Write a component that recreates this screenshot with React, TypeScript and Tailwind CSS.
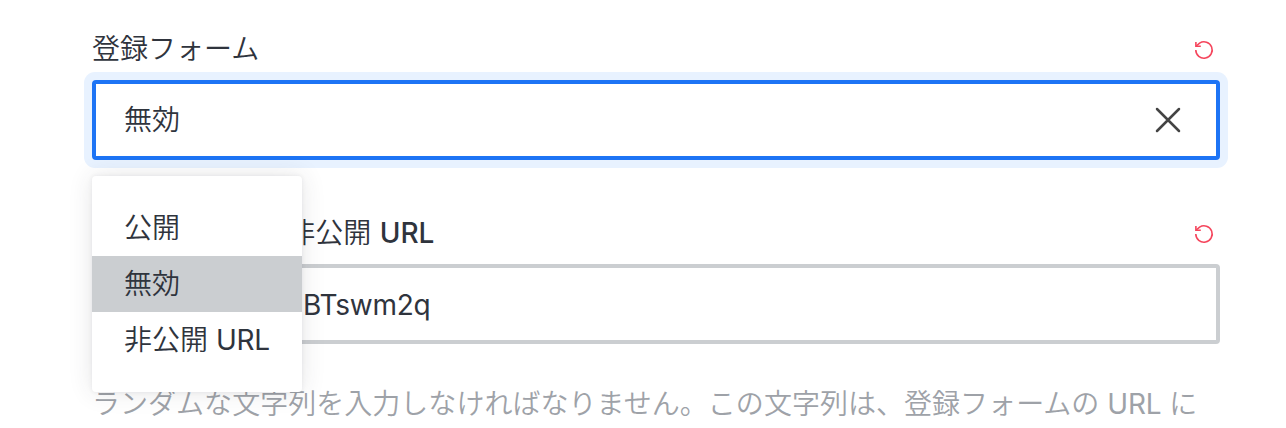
import type { ReactNode } from "react";

function ResetIcon() {
  return (
    <svg className="h-5 w-5" viewBox="0 0 20 20" fill="none" stroke="#f5455c" strokeWidth="1.6">
      <path d="M1.8 10A8.2 8.2 0 1 0 5.6 3.1L2.2 6" />
      <path d="M1.9 2V6.2H6.8" />
    </svg>
  );
}

function CloseIcon() {
  return (
    <svg className="h-7 w-7" viewBox="0 0 28 28" fill="none" stroke="#444" strokeWidth="2.5" strokeLinecap="round">
      <path d="M3 3L25 25M25 3L3 25" />
    </svg>
  );
}

function Label({ children }: { children: ReactNode }) {
  return (
    <div className="flex h-14 items-center justify-between pr-1.5">
      <span className="pt-0.5 [word-spacing:0.7px]">{children}</span>
      <button type="button" className="mt-1">
        <ResetIcon />
      </button>
    </div>
  );
}

function Latin({ children }: { children: ReactNode }) {
  return <span className="font-normal tracking-[-0.25px]">{children}</span>;
}

export default function App() {
  return (
    <main className="h-[428px] overflow-hidden bg-white pt-5 pl-[92px] font-['Inter','Noto_Sans_CJK_JP',sans-serif] text-[28px] leading-[56px] font-[350] whitespace-nowrap text-[#2f343d]">
      <section className="relative w-[1128px]">
        <Label>登録フォーム</Label>
        <div className="mt-1 flex h-20 items-center justify-between rounded-[4px] border-4 border-[#1d74f5] bg-white pr-[34px] pl-7 shadow-[0_0_0_8px_#e8f2ff]">
          <span>無効</span>
          <CloseIcon />
        </div>
        <ul className="absolute top-[156px] left-0 z-10 h-[216px] w-[210px] rounded-[4px] bg-white py-6 shadow-[0_0_4px_rgba(47,52,61,0.08),0_0_24px_rgba(47,52,61,0.12)]">
          <li className="h-14 pl-8">公開</li>
          <li className="h-14 bg-[#cbced1] pl-8">無効</li>
          <li className="h-14 pl-8">
            非公開 <Latin>URL</Latin>
          </li>
        </ul>
      </section>
      <section className="w-[1128px] pt-11">
        <Label>
          登録フォームの非公開 <span className="font-medium">URL</span>
        </Label>
        <div className="mt-1 flex h-20 items-center rounded-[4px] border-4 border-[#cbced1] bg-white pl-[207px]">
          <span className="pt-0.5">
            <Latin>BTswm2q</Latin>
          </span>
        </div>
        <p className="mt-8 tracking-[0.03px] text-[#9ea2a8]">
          ランダムな文字列を入力しなければなりません。この文字列は、登録フォームの <Latin>URL</Latin> に
        </p>
      </section>
    </main>
  );
}
